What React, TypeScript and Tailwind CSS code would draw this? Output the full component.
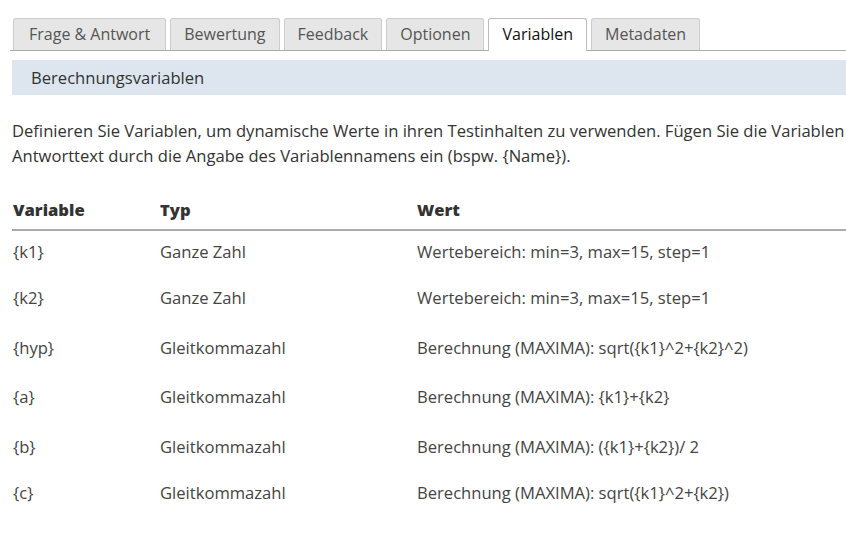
const tabs = ["Frage & Antwort", "Bewertung", "Feedback", "Optionen", "Variablen", "Metadaten"]

const rows = [
  { name: "{k1}", type: "Ganze Zahl", value: "Wertebereich: min=3, max=15, step=1", h: "h-[42px]" },
  { name: "{k2}", type: "Ganze Zahl", value: "Wertebereich: min=3, max=15, step=1", h: "h-[50px]" },
  { name: "{hyp}", type: "Gleitkommazahl", value: "Berechnung (MAXIMA): sqrt({k1}^2+{k2}^2)", h: "h-[50px]" },
  { name: "{a}", type: "Gleitkommazahl", value: "Berechnung (MAXIMA): {k1}+{k2}", h: "h-[48px]" },
  { name: "{b}", type: "Gleitkommazahl", value: "Berechnung (MAXIMA): ({k1}+{k2})/ 2", h: "h-[52px]" },
  { name: "{c}", type: "Gleitkommazahl", value: "Berechnung (MAXIMA): sqrt({k1}^2+{k2})", h: "h-[40px]" },
]

export default function App() {
  return (
    <div className="w-full h-[533px] overflow-hidden bg-white font-['Open_Sans',sans-serif] text-[#444]">
      <div className="w-[1020px] pl-[10px] pt-[18px]">
        {/* tabs */}
        <div className="flex gap-[4px] pl-[3px] border-b border-[#aaa] h-[33px]">
          {tabs.map((tab, i) => {
            const active = tab === "Variablen"
            const pad = i === 0 ? "px-[15px]" : "px-[13px]"
            return (
              <div
                key={tab}
                className={
                  active
                    ? `h-[33px] ${pad} rounded-t-[3px] border border-b-0 border-[#bbb] bg-white text-[16px] leading-[31px] text-[#111]`
                    : `h-[32px] ${pad} rounded-t-[3px] border border-b-0 border-[#ccc] bg-[#e6e6e6] text-[16px] leading-[31px] text-[#555]`
                }
              >
                {tab}
              </div>
            )
          })}
        </div>

        <div className="mt-[9px] ml-[2px] h-[35px] bg-[#dde6ee] pl-[19px] text-[16.6px] leading-[35px] text-[#333]">
          Berechnungsvariablen
        </div>

        <p className="mt-[23px] ml-[2px] text-[16.6px] leading-[25px] text-[#333] whitespace-nowrap">
          Definieren Sie Variablen, um dynamische Werte in ihren Testinhalten zu verwenden. Fügen Sie die Variablen
          <br />
          Antworttext durch die Angabe des Variablennamens ein (bspw. {"{Name}"}).
        </p>

        <div className="mt-[23px] ml-[2px]">
          <div className="flex h-[40px] items-center border-b-2 border-[#aaa] text-[16.6px] font-extrabold text-[#333]">
            <div className="w-[148px] pl-[1px]">Variable</div>
            <div className="w-[257px]">Typ</div>
            <div>Wert</div>
          </div>
          {rows.map((row) => (
            <div key={row.name} className={`flex items-center text-[16.6px] text-[#444] ${row.h}`}>
              <div className="w-[148px] pl-[1px]">{row.name}</div>
              <div className="w-[257px]">{row.type}</div>
              <div>{row.value}</div>
            </div>
          ))}
        </div>
      </div>
    </div>
  )
}
